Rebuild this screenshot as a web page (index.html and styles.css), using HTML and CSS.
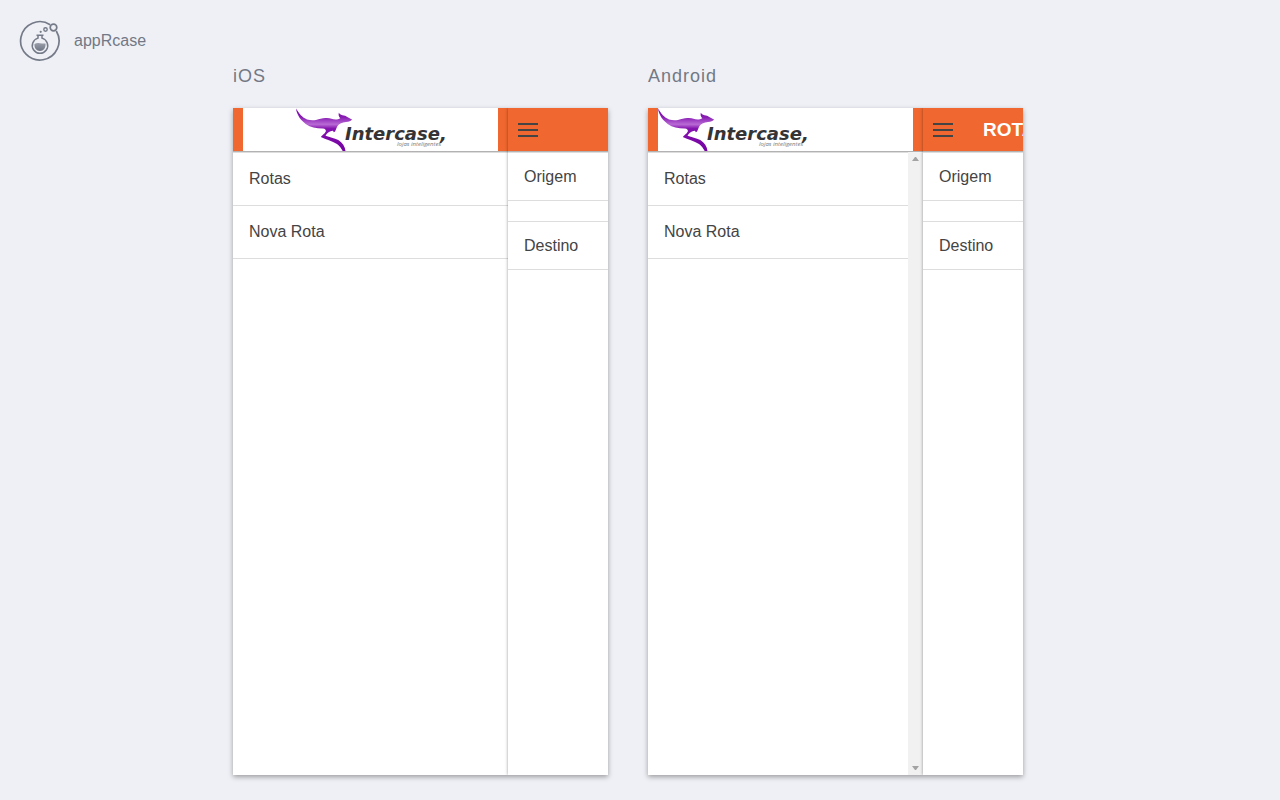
FILE: index.html
```html
<!DOCTYPE html>
<html lang="pt">
<head>
<meta charset="utf-8">
<title>appRcase</title>
<link rel="stylesheet" href="styles.css">
</head>
<body>
<svg class="defs" aria-hidden="true">
  <defs>
    <linearGradient id="purple" x1="0" y1="0" x2="0" y2="43" gradientUnits="userSpaceOnUse">
      <stop offset="0" stop-color="#7600a4"/>
      <stop offset=".22" stop-color="#8a1fb4"/>
      <stop offset=".38" stop-color="#b86ad4"/>
      <stop offset=".48" stop-color="#8413ae"/>
      <stop offset="1" stop-color="#7400a2"/>
    </linearGradient>
    <linearGradient id="liquid" x1="0" y1="0" x2="0" y2="1">
      <stop offset="0" stop-color="#9a9eab"/>
      <stop offset="1" stop-color="#6f7583"/>
    </linearGradient>
  </defs>
  <symbol id="intercase" viewBox="0 0 150 44" overflow="visible">
    <path fill="url(#purple)" d="M0 .6C3 5.500 6.500 9.800 11 11.400C14 12.300 17 12.400 20 11.900C24 11 27 9.500 31 10C35 10.300 37 11.800 41 11.400Q43 11 44.300 10.200C42.600 8.500 42.400 7 42.800 4.700C44 6.500 46 7.200 48 7.500C50.500 8 51.500 9.700 56 11.200C55 13.300 53 13.800 50 14C46 14.300 43.500 15.500 41.700 17.700C40 20 39.700 24 37.800 24.200L37 22.700L35.300 22.900C32.500 23.500 31 25.300 29.500 27.700C34 29.300 38 30 42.300 32C46.500 34.500 49 38.500 49.500 43H46.700C45.500 40.500 43.500 38 41 36C36 33 30 31.300 24.800 28.900C26 27.300 28.500 26 29.800 23.500C30.300 21.700 29 20.700 27 20.400C20 20.300 14.500 19.300 10 16.200C5.500 13 1 8 0 .6Z"/>
    <text class="logo-name" x="49" y="32">Intercase,</text>
    <text class="logo-tag" x="101" y="38">lojas inteligentes</text>
  </symbol>
</svg>

<header class="brand">
  <svg class="brand-icon" viewBox="0 0 42 42" width="42" height="42" fill="none" stroke="#747a88" aria-hidden="true">
    <path stroke-width="1.700" d="M31.200 4.700A19.200 19.200 0 1 0 37.300 11"/>
    <circle cx="34.500" cy="7.500" r="3.300" stroke-width="1.700"/>
    <circle cx="26.500" cy="9.500" r="1.700" stroke-width="1.400"/>
    <circle cx="21.700" cy="11.800" r="1.100" fill="#747a88" stroke="none"/>
    <path stroke-width="1.500" d="M17.500 15.200H24.500M19 15.500V18.100A7.700 7.700 0 1 0 23 18.100V15.500"/>
    <path fill="url(#liquid)" stroke="none" d="M15.500 24Q18 22.600 21 23.200T26.500 23.500C27 28 24.500 31 21 31S15 28 15.500 24Z"/>
  </svg>
  <span>appRcase</span>
</header>

<main class="previews">
  <section class="preview">
    <h2 class="platform">iOS</h2>
    <div class="phone">
      <nav class="menu">
        <div class="bar"><div class="logo-box centered"><svg class="logo" role="img" aria-label="Intercase, lojas inteligentes"><use href="#intercase"/></svg></div></div>
        <div class="menu-body">
          <div class="links"><a href="#rotas">Rotas</a><a href="#nova-rota">Nova Rota</a></div>
        </div>
      </nav>
      <div class="view">
        <div class="bar"><button class="toggle" type="button" aria-label="Menu"><i></i><i></i><i></i></button></div>
        <div class="fields">
          <div class="field">Origem</div>
          <div class="field">Destino</div>
        </div>
      </div>
    </div>
  </section>

  <section class="preview">
    <h2 class="platform">Android</h2>
    <div class="phone">
      <nav class="menu">
        <div class="bar"><div class="logo-box"><svg class="logo" role="img" aria-label="Intercase, lojas inteligentes"><use href="#intercase"/></svg></div></div>
        <div class="menu-body">
          <div class="links"><a href="#rotas">Rotas</a><a href="#nova-rota">Nova Rota</a></div>
          <div class="scrollbar">
            <svg width="7" height="4" viewBox="0 0 7 4"><path fill="#a3a3a3" d="M0 4L3 0H4L7 4Z"/></svg>
            <svg width="7" height="4" viewBox="0 0 7 4"><path fill="#a3a3a3" d="M0 0H7L4 4H3Z"/></svg>
          </div>
        </div>
      </nav>
      <div class="view">
        <div class="bar"><button class="toggle" type="button" aria-label="Menu"><i></i><i></i><i></i></button><h1 class="title">ROTAS</h1></div>
        <div class="fields">
          <div class="field">Origem</div>
          <div class="field">Destino</div>
        </div>
      </div>
    </div>
  </section>
</main>
</body>
</html>
```
FILE: styles.css
```css
* {
  box-sizing: border-box;
}

body {
  margin: 0;
  min-height: 100vh;
  background: #eff0f5;
  color: #444;
  font: 16px/20px "Liberation Sans", Arial, sans-serif;
}

.defs {
  position: absolute;
  width: 0;
  height: 0;
}

.brand {
  display: flex;
  align-items: center;
  gap: 13px;
  height: 64px;
  padding: 18px 19px 0;
  color: #727885;
}

.brand-icon {
  flex: none;
}

.previews {
  display: flex;
  justify-content: center;
  gap: 40px;
  padding: 0 24px 24px 0;
}

.preview {
  flex: 0 1 375px;
  min-width: 0;
  display: flex;
  flex-direction: column;
  gap: 20px;
}

.platform {
  margin: 0;
  color: #727885;
  font-size: 18px;
  font-weight: 400;
  line-height: 24px;
  letter-spacing: 1px;
}

.phone {
  display: flex;
  overflow: hidden;
  height: calc(100vh - 133px);
  background: #fff;
  box-shadow: 0 2px 5px rgba(0, 0, 0, 0.35);
}

.menu {
  flex: 0 0 275px;
  display: flex;
  flex-direction: column;
}

.bar {
  flex: none;
  display: flex;
  align-items: center;
  height: 44px;
  padding: 0 10px;
  border-bottom: 1px solid #b2b2b2;
  background: #f0672f;
}

.logo-box {
  flex: 1;
  display: flex;
  height: 43px;
  background: #fff;
}

.centered {
  justify-content: center;
}

.logo {
  width: 150px;
  height: 44px;
  overflow: visible;
}

.logo-name {
  fill: #353334;
  font: italic 700 18px "DejaVu Sans", sans-serif;
}

.logo-tag {
  fill: #777;
  font: italic 6px "Open Sans", sans-serif;
}

.menu-body {
  flex: 1;
  display: flex;
}

.links {
  flex: 1;
  border-top: 1px solid #ddd;
}

.links a {
  display: block;
  padding: 16px;
  border-bottom: 1px solid #ddd;
  color: #444;
  text-decoration: none;
}

.scrollbar {
  display: flex;
  flex-direction: column;
  justify-content: space-between;
  align-items: center;
  width: 15px;
  padding: 5px 0;
  background: #f1f1f1;
}

.view {
  flex: 1;
  z-index: 1;
  min-width: 0;
  background: #fff;
  box-shadow: 0 0 3px rgba(0, 0, 0, 0.4);
}

.toggle {
  flex: none;
  display: flex;
  flex-direction: column;
  gap: 4px;
  width: 20px;
  padding: 0;
  border: 0;
  background: none;
}

.toggle i {
  height: 2px;
  width: 100%;
  background: #444;
}

.title {
  margin: 0 0 0 30px;
  color: #fff;
  font-size: 19px;
  line-height: 42px;
}

.fields {
  display: flex;
  flex-direction: column;
  gap: 20px;
}

.field {
  padding: 14px 16px 13px;
  border: solid #ddd;
  border-width: 1px 0;
}
```
